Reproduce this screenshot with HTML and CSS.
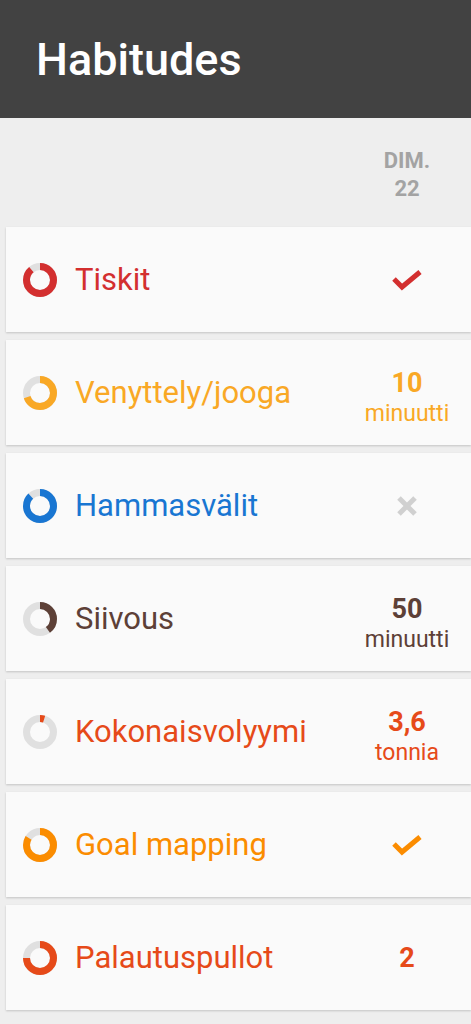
FILE: index.html
```html
<!DOCTYPE html>
<html lang="fi">
<head>
  <meta charset="UTF-8" />
  <title>Habitudes</title>
  <meta name="viewport" content="width=device-width, initial-scale=1.0" />
  <link rel="stylesheet" href="styles.css">
</head>
<body>

  <header class="appbar">
    <h1>Habitudes</h1>
  </header>

  <div class="day-header">
    <div class="day">
      <span>DIM.</span>
      <span>22</span>
    </div>
  </div>

  <div class="habit-list">

    <div class="habit red">
      <svg class="ring" viewBox="0 0 34 34">
        <circle class="track" cx="17" cy="17" r="13.5" />
        <circle class="arc" cx="17" cy="17" r="13.5" pathLength="100" stroke-dasharray="89 100" />
      </svg>
      <span class="name">Tiskit</span>
      <div class="value">
        <svg class="check" viewBox="0 0 32 24"><polyline points="3,11 11,19 29,4" /></svg>
      </div>
    </div>

    <div class="habit amber">
      <svg class="ring" viewBox="0 0 34 34">
        <circle class="track" cx="17" cy="17" r="13.5" />
        <circle class="arc" cx="17" cy="17" r="13.5" pathLength="100" stroke-dasharray="70 100" />
      </svg>
      <span class="name">Venyttely/jooga</span>
      <div class="value two-line">
        <span class="num">10</span>
        <span class="unit">minuutti</span>
      </div>
    </div>

    <div class="habit blue">
      <svg class="ring" viewBox="0 0 34 34">
        <circle class="track" cx="17" cy="17" r="13.5" />
        <circle class="arc" cx="17" cy="17" r="13.5" pathLength="100" stroke-dasharray="88 100" />
      </svg>
      <span class="name">Hammasvälit</span>
      <div class="value">
        <svg class="cross" viewBox="0 0 22 22"><path d="M3 3 L19 19 M19 3 L3 19" /></svg>
      </div>
    </div>

    <div class="habit brown">
      <svg class="ring" viewBox="0 0 34 34">
        <circle class="track" cx="17" cy="17" r="13.5" />
        <circle class="arc" cx="17" cy="17" r="13.5" pathLength="100" stroke-dasharray="40 100" />
      </svg>
      <span class="name">Siivous</span>
      <div class="value two-line">
        <span class="num">50</span>
        <span class="unit">minuutti</span>
      </div>
    </div>

    <div class="habit deep-orange">
      <svg class="ring" viewBox="0 0 34 34">
        <circle class="track" cx="17" cy="17" r="13.5" />
        <circle class="arc" cx="17" cy="17" r="13.5" pathLength="100" stroke-dasharray="5 100" />
      </svg>
      <span class="name">Kokonaisvolyymi</span>
      <div class="value two-line">
        <span class="num">3,6</span>
        <span class="unit">tonnia</span>
      </div>
    </div>

    <div class="habit orange">
      <svg class="ring" viewBox="0 0 34 34">
        <circle class="track" cx="17" cy="17" r="13.5" />
        <circle class="arc" cx="17" cy="17" r="13.5" pathLength="100" stroke-dasharray="84 100" />
      </svg>
      <span class="name">Goal mapping</span>
      <div class="value">
        <svg class="check" viewBox="0 0 32 24"><polyline points="3,11 11,19 29,4" /></svg>
      </div>
    </div>

    <div class="habit deep-orange">
      <svg class="ring" viewBox="0 0 34 34">
        <circle class="track" cx="17" cy="17" r="13.5" />
        <circle class="arc" cx="17" cy="17" r="13.5" pathLength="100" stroke-dasharray="75 100" />
      </svg>
      <span class="name">Palautuspullot</span>
      <div class="value">
        <span class="num">2</span>
      </div>
    </div>

  </div>

</body>
</html>
```

FILE: styles.css
```css
body {
  margin: 0;
  font-family: Roboto, "Noto Sans", sans-serif;
  background-color: #eeeeee;
}

.appbar {
  height: 118px;
  background: #424242;
  display: flex;
  align-items: center;
  padding-left: 36px;
}

.appbar h1 {
  margin: 0;
  color: #ffffff;
  font-size: 45px;
  font-weight: 500;
  line-height: 1;
}

.day-header {
  height: 107px;
  box-sizing: border-box;
  padding-top: 6px;
  display: flex;
  justify-content: flex-end;
  align-items: center;
  padding-right: 17px;
}

.day {
  width: 94px;
  display: flex;
  flex-direction: column;
  align-items: center;
  color: #a3a3a3;
  font-size: 22px;
  font-weight: 700;
  line-height: 28px;
}

.habit-list {
  padding-top: 2px;
}

.habit {
  height: 105px;
  margin: 0 0 8px 6px;
  padding-left: 17px;
  padding-right: 17px;
  background: #fafafa;
  box-shadow: 0 1px 2px rgba(0,0,0,0.18);
  display: flex;
  align-items: center;
}

.ring {
  width: 34px;
  height: 34px;
  flex-shrink: 0;
  transform: rotate(-90deg);
}

.ring circle {
  fill: none;
  stroke-width: 7;
}

.ring .track {
  stroke: #e0e0e0;
}

.ring .arc {
  stroke: currentColor;
}

.name {
  flex: 1;
  margin-left: 18px;
  font-size: 31px;
  white-space: nowrap;
}

.value {
  width: 94px;
  display: flex;
  flex-direction: column;
  align-items: center;
}

.value.two-line {
  padding-top: 12px;
}

.num {
  font-size: 27px;
  font-weight: 700;
  line-height: 30px;
}

.unit {
  font-size: 23px;
  line-height: 32px;
}

.check {
  width: 32px;
  height: 24px;
}

.check polyline {
  fill: none;
  stroke: currentColor;
  stroke-width: 5;
}

.cross {
  width: 22px;
  height: 22px;
}

.cross path {
  fill: none;
  stroke: #d0d0d0;
  stroke-width: 5;
}

.red { color: #d32f2f; }
.amber { color: #f9a825; }
.blue { color: #1976d2; }
.brown { color: #5d4037; }
.deep-orange { color: #e64a19; }
.orange { color: #fb8c00; }
```
